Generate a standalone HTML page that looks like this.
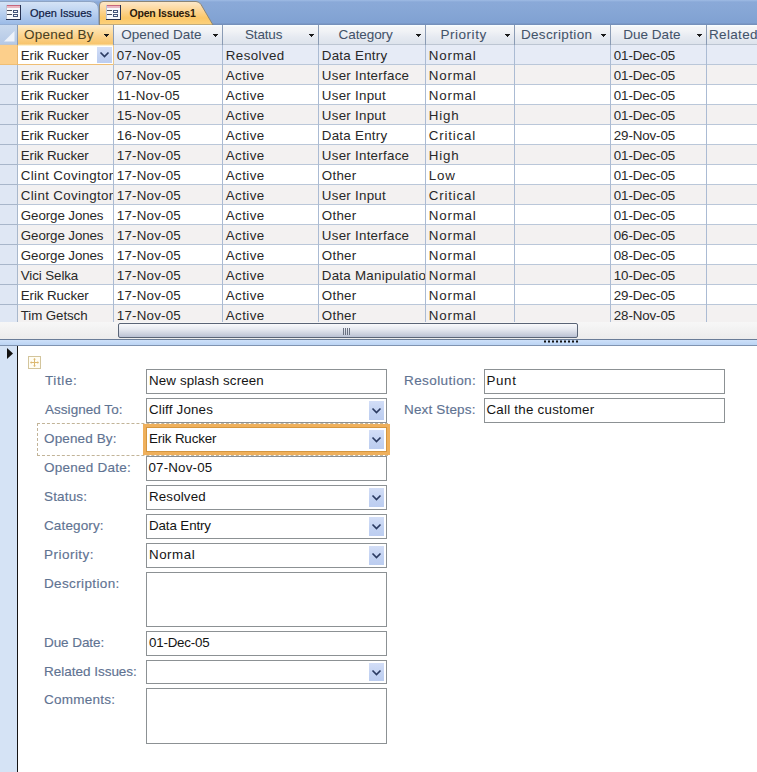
<!DOCTYPE html>
<html><head><meta charset="utf-8">
<style>
*{box-sizing:border-box;margin:0;padding:0}
html,body{width:757px;height:772px;overflow:hidden;background:#fff;font-family:"Liberation Sans",sans-serif;position:relative}
.a{position:absolute}
.t{position:absolute;white-space:pre;line-height:normal}
.clip{position:absolute;overflow:hidden}
.hl{position:absolute;top:25px;width:1px;height:20px;background:#8a9bb4}
.harr{position:absolute;top:34px;width:0;height:0;border-left:2.5px solid transparent;border-right:2.5px solid transparent;border-top:3px solid #1a1a1a}
.box{position:absolute;border:1px solid #8c9194;background:#fff}
.dd{position:absolute;width:15px;height:18px;background:linear-gradient(#d3def7,#c2d2f2 60%,#bccdf0)}

</style></head><body>
<!-- tab bar -->
<div class="a" style="left:0;top:0;width:757px;height:25px;background:linear-gradient(#9fbbe4 0,#8aa9d8 2px,#87a7d6 40%,#80a1d2 23px,#7590bb 24px,#7590bb 25px)"></div>
<svg class="a" style="left:0;top:0" width="230" height="25">
<defs>
<linearGradient id="ig" x1="0" y1="0" x2="0" y2="1"><stop offset="0" stop-color="#d6e4f6"/><stop offset="0.45" stop-color="#bcd2f0"/><stop offset="1" stop-color="#99b9e6"/></linearGradient>
<linearGradient id="ag" x1="0" y1="0" x2="0" y2="1"><stop offset="0" stop-color="#fde9cc"/><stop offset="0.3" stop-color="#fdd9a0"/><stop offset="0.7" stop-color="#fbc767"/><stop offset="1" stop-color="#fcd27e"/></linearGradient>
</defs>
<path d="M-2 25 L-2 1.5 L90 1.5 Q98.5 1.5 98.5 10 L98.5 25 Z" fill="url(#ig)" stroke="#8ea4c4" stroke-width="1"/>
<path d="M99.5 25 L99.5 5 Q99.5 1.5 103 1.5 L196 1.5 Q199 1.5 201 4.5 L213 25 Z" fill="url(#ag)" stroke="#8b8577" stroke-width="1"/>
</svg>
<svg class="a" style="left:6px;top:5px" width="15" height="15" shape-rendering="crispEdges"><rect x="0" y="0" width="15" height="15" fill="#f7f8fb"/><rect x="0" y="0" width="15" height="1" fill="#c5667c"/><rect x="0" y="1" width="14" height="2" fill="#eab6c2"/><rect x="0" y="0" width="1" height="15" fill="#b9c3d6"/><rect x="14" y="0" width="1" height="15" fill="#263150"/><rect x="0" y="14" width="15" height="1" fill="#263150"/><rect x="1" y="5" width="5" height="1" fill="#474d5c"/><rect x="1" y="9" width="5" height="1" fill="#474d5c"/><path d="M7 5h5v3h-5z M8 6v1h3v-1z" fill="#44557a" fill-rule="evenodd"/><path d="M7 9h5v3h-5z M8 10v1h3v-1z" fill="#44557a" fill-rule="evenodd"/></svg>
<svg class="a" style="left:106px;top:5px" width="15" height="15" shape-rendering="crispEdges"><rect x="0" y="0" width="15" height="15" fill="#f7f8fb"/><rect x="0" y="0" width="15" height="1" fill="#c5667c"/><rect x="0" y="1" width="14" height="2" fill="#eab6c2"/><rect x="0" y="0" width="1" height="15" fill="#b9c3d6"/><rect x="14" y="0" width="1" height="15" fill="#263150"/><rect x="0" y="14" width="15" height="1" fill="#263150"/><rect x="1" y="5" width="5" height="1" fill="#474d5c"/><rect x="1" y="9" width="5" height="1" fill="#474d5c"/><path d="M7 5h5v3h-5z M8 6v1h3v-1z" fill="#44557a" fill-rule="evenodd"/><path d="M7 9h5v3h-5z M8 10v1h3v-1z" fill="#44557a" fill-rule="evenodd"/></svg>

<!-- header -->
<div class="a" style="left:0;top:25px;width:757px;height:20px;background:linear-gradient(#f8fdff 0,#f8fdff 1px,#f3f4f6 2px,#f1f3f6 6px,#e6eaf1 12px,#dde3ec 19px);border-bottom:1px solid #bcc5d2"></div>
<div class="a" style="left:0;top:25px;width:17px;height:19px;background:linear-gradient(#c9d9ee,#b5c9e6)"></div>
<svg class="a" style="left:4px;top:31px" width="11" height="11"><path d="M10.5 0 L10.5 10.5 L0 10.5 Z" fill="#eef3fb"/></svg>
<div class="a" style="left:18px;top:25px;width:95px;height:20px;background:linear-gradient(#fdeccf 0,#fde3b0 20%,#fbd189 60%,#f8c56c 95%,#fbe2b5 100%)"></div>
<div class="hl" style="left:17px"></div><div class="hl" style="left:113px"></div><div class="hl" style="left:222px"></div><div class="hl" style="left:318px"></div><div class="hl" style="left:425px"></div><div class="hl" style="left:514px"></div><div class="hl" style="left:610px"></div><div class="hl" style="left:706px"></div>
<svg class="a" style="left:104px;top:34px" width="5" height="3"><path d="M0 0H5V1H4V2H3V3H2V2H1V1H0Z" fill="#1a1a1a"/></svg><svg class="a" style="left:213px;top:34px" width="5" height="3"><path d="M0 0H5V1H4V2H3V3H2V2H1V1H0Z" fill="#1a1a1a"/></svg><svg class="a" style="left:309px;top:34px" width="5" height="3"><path d="M0 0H5V1H4V2H3V3H2V2H1V1H0Z" fill="#1a1a1a"/></svg><svg class="a" style="left:416px;top:34px" width="5" height="3"><path d="M0 0H5V1H4V2H3V3H2V2H1V1H0Z" fill="#1a1a1a"/></svg><svg class="a" style="left:505px;top:34px" width="5" height="3"><path d="M0 0H5V1H4V2H3V3H2V2H1V1H0Z" fill="#1a1a1a"/></svg><svg class="a" style="left:601px;top:34px" width="5" height="3"><path d="M0 0H5V1H4V2H3V3H2V2H1V1H0Z" fill="#1a1a1a"/></svg><svg class="a" style="left:697px;top:34px" width="5" height="3"><path d="M0 0H5V1H4V2H3V3H2V2H1V1H0Z" fill="#1a1a1a"/></svg>

<!-- grid rows -->
<div class="a" id="grid" style="left:0;top:45px;width:757px;height:277px;overflow:hidden">
<div class="a" style="left:0;top:0px;width:757px;height:20px;background:#e6ebf6;border-bottom:1px solid #bac7d9"></div>
<div class="a" style="left:0;top:0px;width:17px;height:20px;background:#fccf8b;border-bottom:1px solid #a8b6ca"></div>
<div class="a" style="left:0;top:20px;width:757px;height:20px;background:#f3f1f1;border-bottom:1px solid #bac7d9"></div>
<div class="a" style="left:0;top:20px;width:17px;height:20px;background:#dfe7f4;border-bottom:1px solid #a8b6ca"></div>
<div class="a" style="left:0;top:40px;width:757px;height:20px;background:#ffffff;border-bottom:1px solid #bac7d9"></div>
<div class="a" style="left:0;top:40px;width:17px;height:20px;background:#dfe7f4;border-bottom:1px solid #a8b6ca"></div>
<div class="a" style="left:0;top:60px;width:757px;height:20px;background:#f3f1f1;border-bottom:1px solid #bac7d9"></div>
<div class="a" style="left:0;top:60px;width:17px;height:20px;background:#dfe7f4;border-bottom:1px solid #a8b6ca"></div>
<div class="a" style="left:0;top:80px;width:757px;height:20px;background:#ffffff;border-bottom:1px solid #bac7d9"></div>
<div class="a" style="left:0;top:80px;width:17px;height:20px;background:#dfe7f4;border-bottom:1px solid #a8b6ca"></div>
<div class="a" style="left:0;top:100px;width:757px;height:20px;background:#f3f1f1;border-bottom:1px solid #bac7d9"></div>
<div class="a" style="left:0;top:100px;width:17px;height:20px;background:#dfe7f4;border-bottom:1px solid #a8b6ca"></div>
<div class="a" style="left:0;top:120px;width:757px;height:20px;background:#ffffff;border-bottom:1px solid #bac7d9"></div>
<div class="a" style="left:0;top:120px;width:17px;height:20px;background:#dfe7f4;border-bottom:1px solid #a8b6ca"></div>
<div class="a" style="left:0;top:140px;width:757px;height:20px;background:#f3f1f1;border-bottom:1px solid #bac7d9"></div>
<div class="a" style="left:0;top:140px;width:17px;height:20px;background:#dfe7f4;border-bottom:1px solid #a8b6ca"></div>
<div class="a" style="left:0;top:160px;width:757px;height:20px;background:#ffffff;border-bottom:1px solid #bac7d9"></div>
<div class="a" style="left:0;top:160px;width:17px;height:20px;background:#dfe7f4;border-bottom:1px solid #a8b6ca"></div>
<div class="a" style="left:0;top:180px;width:757px;height:20px;background:#f3f1f1;border-bottom:1px solid #bac7d9"></div>
<div class="a" style="left:0;top:180px;width:17px;height:20px;background:#dfe7f4;border-bottom:1px solid #a8b6ca"></div>
<div class="a" style="left:0;top:200px;width:757px;height:20px;background:#ffffff;border-bottom:1px solid #bac7d9"></div>
<div class="a" style="left:0;top:200px;width:17px;height:20px;background:#dfe7f4;border-bottom:1px solid #a8b6ca"></div>
<div class="a" style="left:0;top:220px;width:757px;height:20px;background:#f3f1f1;border-bottom:1px solid #bac7d9"></div>
<div class="a" style="left:0;top:220px;width:17px;height:20px;background:#dfe7f4;border-bottom:1px solid #a8b6ca"></div>
<div class="a" style="left:0;top:240px;width:757px;height:20px;background:#ffffff;border-bottom:1px solid #bac7d9"></div>
<div class="a" style="left:0;top:240px;width:17px;height:20px;background:#dfe7f4;border-bottom:1px solid #a8b6ca"></div>
<div class="a" style="left:0;top:260px;width:757px;height:20px;background:#f3f1f1;border-bottom:1px solid #bac7d9"></div>
<div class="a" style="left:0;top:260px;width:17px;height:20px;background:#dfe7f4;border-bottom:1px solid #a8b6ca"></div>
<div class="a" style="left:17px;top:0;width:1px;height:277px;background:#a9b8cc"></div>
<div class="a" style="left:113px;top:0;width:1px;height:277px;background:#abbbd3"></div>
<div class="a" style="left:222px;top:0;width:1px;height:277px;background:#abbbd3"></div>
<div class="a" style="left:318px;top:0;width:1px;height:277px;background:#abbbd3"></div>
<div class="a" style="left:425px;top:0;width:1px;height:277px;background:#abbbd3"></div>
<div class="a" style="left:514px;top:0;width:1px;height:277px;background:#abbbd3"></div>
<div class="a" style="left:610px;top:0;width:1px;height:277px;background:#abbbd3"></div>
<div class="a" style="left:706px;top:0;width:1px;height:277px;background:#abbbd3"></div>
</div>
<!-- selected cell -->
<div class="a" style="left:18px;top:45px;width:95px;height:19px;background:#fff;border-top:1px solid #fcf1cc"></div>
<div class="a" style="left:0;top:64px;width:114px;height:1px;background:#efbe74"></div>
<div class="a" style="left:113px;top:45px;width:1px;height:20px;background:#e9c890"></div>
<div class="a" style="left:17px;top:45px;width:1px;height:20px;background:#e9b870"></div>
<div class="dd" style="left:97px;top:47px;height:16px"></div>
<svg class="a" style="left:99px;top:51px" width="11" height="8"><path d="M1.5 1.5 L5.5 5.5 L9.5 1.5" fill="none" stroke="#2b3b62" stroke-width="1.7"/></svg>

<!-- scrollbar -->
<div class="a" style="left:0;top:322px;width:757px;height:17px;background:linear-gradient(#f7f7f7,#ececec)"></div>
<div class="a" style="left:118px;top:323px;width:460px;height:15px;border:1px solid #596476;border-radius:2px;background:linear-gradient(#f9fafc,#e6e9f0 40%,#c9cfdd 80%,#b9c1d4)"></div>
<svg class="a" style="left:343px;top:328px" width="9" height="7"><path d="M0.5 0V7M2.5 0V7M4.5 0V7M6.5 0V7" stroke="#6a7282" stroke-width="1"/></svg>
<!-- splitter -->
<div class="a" style="left:0;top:339px;width:757px;height:7px;background:linear-gradient(#cde0f8,#bcd4f4);border-top:1px solid #6a7d98;border-bottom:1px solid #7f93b0"></div>
<svg class="a" style="left:544px;top:340px" width="36" height="3"><path d="M0 1.5H36" stroke="#111" stroke-width="2" stroke-dasharray="2 2"/></svg>

<!-- form -->
<div class="a" style="left:0;top:346px;width:17px;height:426px;background:#d5e3f5"></div>
<div class="a" style="left:17px;top:346px;width:1px;height:426px;background:#141414"></div>
<svg class="a" style="left:6px;top:348px" width="9" height="12"><path d="M1 0 L7 5.5 L1 11 Z" fill="#111"/></svg>
<svg class="a" style="left:28px;top:356px" width="13" height="13"><rect x="0.5" y="0.5" width="12" height="12" fill="#fffdf4" stroke="#d3c59c"/><path d="M6.5 3V10M3 6.5H10" stroke="#dcb870" stroke-width="1"/><path d="M6.5 2L5 3.5H8Z M6.5 11L5 9.5H8Z M2 6.5L3.5 5V8Z M11 6.5L9.5 5V8Z" fill="#dcb870"/></svg>

<div class="a" style="left:37px;top:423px;width:351px;height:33px;border:1px dashed #c2b498"></div>
<div class="a" style="left:143px;top:424px;width:247px;height:31px;border:3px solid #efb05c"></div>
<div class="box" style="left:146px;top:369px;width:241px;height:25px;"></div>
<div class="box" style="left:146px;top:398px;width:241px;height:25px;"></div>
<div class="dd" style="left:369px;top:401px;height:19px"></div>
<svg class="a" style="left:371px;top:407px" width="11" height="8"><path d="M1.5 1.5 L5.5 5.5 L9.5 1.5" fill="none" stroke="#2b3b62" stroke-width="1.7"/></svg>
<div class="box" style="left:146px;top:427px;width:241px;height:25px;border-color:#d4963f"></div>
<div class="dd" style="left:369px;top:430px;height:19px"></div>
<svg class="a" style="left:371px;top:436px" width="11" height="8"><path d="M1.5 1.5 L5.5 5.5 L9.5 1.5" fill="none" stroke="#2b3b62" stroke-width="1.7"/></svg>
<div class="box" style="left:146px;top:456px;width:241px;height:25px;"></div>
<div class="box" style="left:146px;top:485px;width:241px;height:25px;"></div>
<div class="dd" style="left:369px;top:488px;height:19px"></div>
<svg class="a" style="left:371px;top:494px" width="11" height="8"><path d="M1.5 1.5 L5.5 5.5 L9.5 1.5" fill="none" stroke="#2b3b62" stroke-width="1.7"/></svg>
<div class="box" style="left:146px;top:514px;width:241px;height:25px;"></div>
<div class="dd" style="left:369px;top:517px;height:19px"></div>
<svg class="a" style="left:371px;top:523px" width="11" height="8"><path d="M1.5 1.5 L5.5 5.5 L9.5 1.5" fill="none" stroke="#2b3b62" stroke-width="1.7"/></svg>
<div class="box" style="left:146px;top:543px;width:241px;height:25px;"></div>
<div class="dd" style="left:369px;top:546px;height:19px"></div>
<svg class="a" style="left:371px;top:552px" width="11" height="8"><path d="M1.5 1.5 L5.5 5.5 L9.5 1.5" fill="none" stroke="#2b3b62" stroke-width="1.7"/></svg>
<div class="box" style="left:146px;top:572px;width:241px;height:55px;"></div>
<div class="box" style="left:146px;top:631px;width:241px;height:25px;"></div>
<div class="box" style="left:146px;top:660px;width:241px;height:24px;"></div>
<div class="dd" style="left:369px;top:663px;height:18px"></div>
<svg class="a" style="left:371px;top:669px" width="11" height="8"><path d="M1.5 1.5 L5.5 5.5 L9.5 1.5" fill="none" stroke="#2b3b62" stroke-width="1.7"/></svg>
<div class="box" style="left:146px;top:688px;width:241px;height:56px;"></div>
<div class="box" style="left:484px;top:369px;width:241px;height:25px;"></div>
<div class="box" style="left:484px;top:398px;width:241px;height:25px;"></div>

<span class="t" id="tab1" style="left:30.00px;top:7.01px;font-size:11px;color:#0e1a44;letter-spacing:0.000px;-webkit-text-stroke:0.2px currentColor">Open Issues</span>
<span class="t" id="tab2" style="left:129.50px;top:7.00px;font-size:10.5px;color:#2b1a0a;letter-spacing:-0.182px;font-weight:bold">Open Issues1</span>
<span class="t" id="h0" style="left:24.00px;top:27.00px;font-size:13.5px;color:#4a3f22;letter-spacing:0.250px;-webkit-text-stroke:0.05px currentColor">Opened By</span>
<span class="t" id="h1" style="left:121.20px;top:27.00px;font-size:13.5px;color:#435369;letter-spacing:0.000px;-webkit-text-stroke:0.05px currentColor">Opened Date</span>
<span class="t" id="h2" style="left:245.00px;top:27.00px;font-size:13.5px;color:#435369;letter-spacing:-0.160px;-webkit-text-stroke:0.05px currentColor">Status</span>
<span class="t" id="h3" style="left:338.60px;top:27.00px;font-size:13.5px;color:#435369;letter-spacing:-0.086px;-webkit-text-stroke:0.05px currentColor">Category</span>
<span class="t" id="h4" style="left:440.40px;top:27.00px;font-size:13.5px;color:#435369;letter-spacing:0.543px;-webkit-text-stroke:0.05px currentColor">Priority</span>
<span class="t" id="h5" style="left:520.90px;top:27.00px;font-size:13.5px;color:#435369;letter-spacing:0.360px;-webkit-text-stroke:0.05px currentColor">Description</span>
<span class="t" id="h6" style="left:623.20px;top:27.00px;font-size:13.5px;color:#435369;letter-spacing:0.029px;-webkit-text-stroke:0.05px currentColor">Due Date</span>
<span class="t" id="h7" style="left:709.00px;top:27.00px;font-size:13.5px;color:#435369;letter-spacing:0.333px;-webkit-text-stroke:0.05px currentColor">Related</span>
<div class="clip" style="left:18px;top:45px;width:95px;height:19px"><span class="t" style="left:20.80px;top:48.01px;font-size:13.35px;color:#282828;letter-spacing:-0.100px;left:2.80px;top:3.01px">Erik Rucker</span></div>
<div class="clip" style="left:114px;top:45px;width:108px;height:19px"><span class="t" style="left:116.80px;top:48.01px;font-size:13.35px;color:#282828;letter-spacing:0.200px;left:2.80px;top:3.01px">07-Nov-05</span></div>
<div class="clip" style="left:223px;top:45px;width:95px;height:19px"><span class="t" style="left:225.80px;top:48.01px;font-size:13.35px;color:#282828;letter-spacing:0.400px;left:2.80px;top:3.01px">Resolved</span></div>
<div class="clip" style="left:319px;top:45px;width:106px;height:19px"><span class="t" style="left:321.80px;top:48.01px;font-size:13.35px;color:#282828;letter-spacing:0.260px;left:2.80px;top:3.01px">Data Entry</span></div>
<div class="clip" style="left:426px;top:45px;width:88px;height:19px"><span class="t" style="left:428.80px;top:48.01px;font-size:13.35px;color:#282828;letter-spacing:0.800px;left:2.80px;top:3.01px">Normal</span></div>
<div class="clip" style="left:611px;top:45px;width:95px;height:19px"><span class="t" style="left:613.80px;top:48.01px;font-size:13.35px;color:#282828;letter-spacing:-0.120px;left:2.80px;top:3.01px">01-Dec-05</span></div>
<div class="clip" style="left:18px;top:65px;width:95px;height:19px"><span class="t" style="left:20.80px;top:68.01px;font-size:13.35px;color:#282828;letter-spacing:-0.100px;left:2.80px;top:3.01px">Erik Rucker</span></div>
<div class="clip" style="left:114px;top:65px;width:108px;height:19px"><span class="t" style="left:116.80px;top:68.01px;font-size:13.35px;color:#282828;letter-spacing:0.200px;left:2.80px;top:3.01px">07-Nov-05</span></div>
<div class="clip" style="left:223px;top:65px;width:95px;height:19px"><span class="t" style="left:225.80px;top:68.01px;font-size:13.35px;color:#282828;letter-spacing:0.400px;left:2.80px;top:3.01px">Active</span></div>
<div class="clip" style="left:319px;top:65px;width:106px;height:19px"><span class="t" style="left:321.80px;top:68.01px;font-size:13.35px;color:#282828;letter-spacing:0.260px;left:2.80px;top:3.01px">User Interface</span></div>
<div class="clip" style="left:426px;top:65px;width:88px;height:19px"><span class="t" style="left:428.80px;top:68.01px;font-size:13.35px;color:#282828;letter-spacing:0.800px;left:2.80px;top:3.01px">Normal</span></div>
<div class="clip" style="left:611px;top:65px;width:95px;height:19px"><span class="t" style="left:613.80px;top:68.01px;font-size:13.35px;color:#282828;letter-spacing:-0.120px;left:2.80px;top:3.01px">01-Dec-05</span></div>
<div class="clip" style="left:18px;top:85px;width:95px;height:19px"><span class="t" style="left:20.80px;top:88.01px;font-size:13.35px;color:#282828;letter-spacing:-0.100px;left:2.80px;top:3.01px">Erik Rucker</span></div>
<div class="clip" style="left:114px;top:85px;width:108px;height:19px"><span class="t" style="left:116.80px;top:88.01px;font-size:13.35px;color:#282828;letter-spacing:0.200px;left:2.80px;top:3.01px">11-Nov-05</span></div>
<div class="clip" style="left:223px;top:85px;width:95px;height:19px"><span class="t" style="left:225.80px;top:88.01px;font-size:13.35px;color:#282828;letter-spacing:0.400px;left:2.80px;top:3.01px">Active</span></div>
<div class="clip" style="left:319px;top:85px;width:106px;height:19px"><span class="t" style="left:321.80px;top:88.01px;font-size:13.35px;color:#282828;letter-spacing:0.260px;left:2.80px;top:3.01px">User Input</span></div>
<div class="clip" style="left:426px;top:85px;width:88px;height:19px"><span class="t" style="left:428.80px;top:88.01px;font-size:13.35px;color:#282828;letter-spacing:0.800px;left:2.80px;top:3.01px">Normal</span></div>
<div class="clip" style="left:611px;top:85px;width:95px;height:19px"><span class="t" style="left:613.80px;top:88.01px;font-size:13.35px;color:#282828;letter-spacing:-0.120px;left:2.80px;top:3.01px">01-Dec-05</span></div>
<div class="clip" style="left:18px;top:105px;width:95px;height:19px"><span class="t" style="left:20.80px;top:108.01px;font-size:13.35px;color:#282828;letter-spacing:-0.100px;left:2.80px;top:3.01px">Erik Rucker</span></div>
<div class="clip" style="left:114px;top:105px;width:108px;height:19px"><span class="t" style="left:116.80px;top:108.01px;font-size:13.35px;color:#282828;letter-spacing:0.200px;left:2.80px;top:3.01px">15-Nov-05</span></div>
<div class="clip" style="left:223px;top:105px;width:95px;height:19px"><span class="t" style="left:225.80px;top:108.01px;font-size:13.35px;color:#282828;letter-spacing:0.400px;left:2.80px;top:3.01px">Active</span></div>
<div class="clip" style="left:319px;top:105px;width:106px;height:19px"><span class="t" style="left:321.80px;top:108.01px;font-size:13.35px;color:#282828;letter-spacing:0.260px;left:2.80px;top:3.01px">User Input</span></div>
<div class="clip" style="left:426px;top:105px;width:88px;height:19px"><span class="t" style="left:428.80px;top:108.01px;font-size:13.35px;color:#282828;letter-spacing:0.800px;left:2.80px;top:3.01px">High</span></div>
<div class="clip" style="left:611px;top:105px;width:95px;height:19px"><span class="t" style="left:613.80px;top:108.01px;font-size:13.35px;color:#282828;letter-spacing:-0.120px;left:2.80px;top:3.01px">01-Dec-05</span></div>
<div class="clip" style="left:18px;top:125px;width:95px;height:19px"><span class="t" style="left:20.80px;top:128.01px;font-size:13.35px;color:#282828;letter-spacing:-0.100px;left:2.80px;top:3.01px">Erik Rucker</span></div>
<div class="clip" style="left:114px;top:125px;width:108px;height:19px"><span class="t" style="left:116.80px;top:128.01px;font-size:13.35px;color:#282828;letter-spacing:0.200px;left:2.80px;top:3.01px">16-Nov-05</span></div>
<div class="clip" style="left:223px;top:125px;width:95px;height:19px"><span class="t" style="left:225.80px;top:128.01px;font-size:13.35px;color:#282828;letter-spacing:0.400px;left:2.80px;top:3.01px">Active</span></div>
<div class="clip" style="left:319px;top:125px;width:106px;height:19px"><span class="t" style="left:321.80px;top:128.01px;font-size:13.35px;color:#282828;letter-spacing:0.260px;left:2.80px;top:3.01px">Data Entry</span></div>
<div class="clip" style="left:426px;top:125px;width:88px;height:19px"><span class="t" style="left:428.80px;top:128.01px;font-size:13.35px;color:#282828;letter-spacing:0.800px;left:2.80px;top:3.01px">Critical</span></div>
<div class="clip" style="left:611px;top:125px;width:95px;height:19px"><span class="t" style="left:613.80px;top:128.01px;font-size:13.35px;color:#282828;letter-spacing:-0.120px;left:2.80px;top:3.01px">29-Nov-05</span></div>
<div class="clip" style="left:18px;top:145px;width:95px;height:19px"><span class="t" style="left:20.80px;top:148.01px;font-size:13.35px;color:#282828;letter-spacing:-0.100px;left:2.80px;top:3.01px">Erik Rucker</span></div>
<div class="clip" style="left:114px;top:145px;width:108px;height:19px"><span class="t" style="left:116.80px;top:148.01px;font-size:13.35px;color:#282828;letter-spacing:0.200px;left:2.80px;top:3.01px">17-Nov-05</span></div>
<div class="clip" style="left:223px;top:145px;width:95px;height:19px"><span class="t" style="left:225.80px;top:148.01px;font-size:13.35px;color:#282828;letter-spacing:0.400px;left:2.80px;top:3.01px">Active</span></div>
<div class="clip" style="left:319px;top:145px;width:106px;height:19px"><span class="t" style="left:321.80px;top:148.01px;font-size:13.35px;color:#282828;letter-spacing:0.260px;left:2.80px;top:3.01px">User Interface</span></div>
<div class="clip" style="left:426px;top:145px;width:88px;height:19px"><span class="t" style="left:428.80px;top:148.01px;font-size:13.35px;color:#282828;letter-spacing:0.800px;left:2.80px;top:3.01px">High</span></div>
<div class="clip" style="left:611px;top:145px;width:95px;height:19px"><span class="t" style="left:613.80px;top:148.01px;font-size:13.35px;color:#282828;letter-spacing:-0.120px;left:2.80px;top:3.01px">01-Dec-05</span></div>
<div class="clip" style="left:18px;top:165px;width:95px;height:19px"><span class="t" style="left:20.80px;top:168.01px;font-size:13.35px;color:#282828;letter-spacing:0.350px;left:2.80px;top:3.01px">Clint Covington</span></div>
<div class="clip" style="left:114px;top:165px;width:108px;height:19px"><span class="t" style="left:116.80px;top:168.01px;font-size:13.35px;color:#282828;letter-spacing:0.200px;left:2.80px;top:3.01px">17-Nov-05</span></div>
<div class="clip" style="left:223px;top:165px;width:95px;height:19px"><span class="t" style="left:225.80px;top:168.01px;font-size:13.35px;color:#282828;letter-spacing:0.400px;left:2.80px;top:3.01px">Active</span></div>
<div class="clip" style="left:319px;top:165px;width:106px;height:19px"><span class="t" style="left:321.80px;top:168.01px;font-size:13.35px;color:#282828;letter-spacing:0.260px;left:2.80px;top:3.01px">Other</span></div>
<div class="clip" style="left:426px;top:165px;width:88px;height:19px"><span class="t" style="left:428.80px;top:168.01px;font-size:13.35px;color:#282828;letter-spacing:0.800px;left:2.80px;top:3.01px">Low</span></div>
<div class="clip" style="left:611px;top:165px;width:95px;height:19px"><span class="t" style="left:613.80px;top:168.01px;font-size:13.35px;color:#282828;letter-spacing:-0.120px;left:2.80px;top:3.01px">01-Dec-05</span></div>
<div class="clip" style="left:18px;top:185px;width:95px;height:19px"><span class="t" style="left:20.80px;top:188.01px;font-size:13.35px;color:#282828;letter-spacing:0.350px;left:2.80px;top:3.01px">Clint Covington</span></div>
<div class="clip" style="left:114px;top:185px;width:108px;height:19px"><span class="t" style="left:116.80px;top:188.01px;font-size:13.35px;color:#282828;letter-spacing:0.200px;left:2.80px;top:3.01px">17-Nov-05</span></div>
<div class="clip" style="left:223px;top:185px;width:95px;height:19px"><span class="t" style="left:225.80px;top:188.01px;font-size:13.35px;color:#282828;letter-spacing:0.400px;left:2.80px;top:3.01px">Active</span></div>
<div class="clip" style="left:319px;top:185px;width:106px;height:19px"><span class="t" style="left:321.80px;top:188.01px;font-size:13.35px;color:#282828;letter-spacing:0.260px;left:2.80px;top:3.01px">User Input</span></div>
<div class="clip" style="left:426px;top:185px;width:88px;height:19px"><span class="t" style="left:428.80px;top:188.01px;font-size:13.35px;color:#282828;letter-spacing:0.800px;left:2.80px;top:3.01px">Critical</span></div>
<div class="clip" style="left:611px;top:185px;width:95px;height:19px"><span class="t" style="left:613.80px;top:188.01px;font-size:13.35px;color:#282828;letter-spacing:-0.120px;left:2.80px;top:3.01px">01-Dec-05</span></div>
<div class="clip" style="left:18px;top:205px;width:95px;height:19px"><span class="t" style="left:20.80px;top:208.01px;font-size:13.35px;color:#282828;letter-spacing:-0.100px;left:2.80px;top:3.01px">George Jones</span></div>
<div class="clip" style="left:114px;top:205px;width:108px;height:19px"><span class="t" style="left:116.80px;top:208.01px;font-size:13.35px;color:#282828;letter-spacing:0.200px;left:2.80px;top:3.01px">17-Nov-05</span></div>
<div class="clip" style="left:223px;top:205px;width:95px;height:19px"><span class="t" style="left:225.80px;top:208.01px;font-size:13.35px;color:#282828;letter-spacing:0.400px;left:2.80px;top:3.01px">Active</span></div>
<div class="clip" style="left:319px;top:205px;width:106px;height:19px"><span class="t" style="left:321.80px;top:208.01px;font-size:13.35px;color:#282828;letter-spacing:0.260px;left:2.80px;top:3.01px">Other</span></div>
<div class="clip" style="left:426px;top:205px;width:88px;height:19px"><span class="t" style="left:428.80px;top:208.01px;font-size:13.35px;color:#282828;letter-spacing:0.800px;left:2.80px;top:3.01px">Normal</span></div>
<div class="clip" style="left:611px;top:205px;width:95px;height:19px"><span class="t" style="left:613.80px;top:208.01px;font-size:13.35px;color:#282828;letter-spacing:-0.120px;left:2.80px;top:3.01px">01-Dec-05</span></div>
<div class="clip" style="left:18px;top:225px;width:95px;height:19px"><span class="t" style="left:20.80px;top:228.01px;font-size:13.35px;color:#282828;letter-spacing:-0.100px;left:2.80px;top:3.01px">George Jones</span></div>
<div class="clip" style="left:114px;top:225px;width:108px;height:19px"><span class="t" style="left:116.80px;top:228.01px;font-size:13.35px;color:#282828;letter-spacing:0.200px;left:2.80px;top:3.01px">17-Nov-05</span></div>
<div class="clip" style="left:223px;top:225px;width:95px;height:19px"><span class="t" style="left:225.80px;top:228.01px;font-size:13.35px;color:#282828;letter-spacing:0.400px;left:2.80px;top:3.01px">Active</span></div>
<div class="clip" style="left:319px;top:225px;width:106px;height:19px"><span class="t" style="left:321.80px;top:228.01px;font-size:13.35px;color:#282828;letter-spacing:0.260px;left:2.80px;top:3.01px">User Interface</span></div>
<div class="clip" style="left:426px;top:225px;width:88px;height:19px"><span class="t" style="left:428.80px;top:228.01px;font-size:13.35px;color:#282828;letter-spacing:0.800px;left:2.80px;top:3.01px">Normal</span></div>
<div class="clip" style="left:611px;top:225px;width:95px;height:19px"><span class="t" style="left:613.80px;top:228.01px;font-size:13.35px;color:#282828;letter-spacing:-0.120px;left:2.80px;top:3.01px">06-Dec-05</span></div>
<div class="clip" style="left:18px;top:245px;width:95px;height:19px"><span class="t" style="left:20.80px;top:248.01px;font-size:13.35px;color:#282828;letter-spacing:-0.100px;left:2.80px;top:3.01px">George Jones</span></div>
<div class="clip" style="left:114px;top:245px;width:108px;height:19px"><span class="t" style="left:116.80px;top:248.01px;font-size:13.35px;color:#282828;letter-spacing:0.200px;left:2.80px;top:3.01px">17-Nov-05</span></div>
<div class="clip" style="left:223px;top:245px;width:95px;height:19px"><span class="t" style="left:225.80px;top:248.01px;font-size:13.35px;color:#282828;letter-spacing:0.400px;left:2.80px;top:3.01px">Active</span></div>
<div class="clip" style="left:319px;top:245px;width:106px;height:19px"><span class="t" style="left:321.80px;top:248.01px;font-size:13.35px;color:#282828;letter-spacing:0.260px;left:2.80px;top:3.01px">Other</span></div>
<div class="clip" style="left:426px;top:245px;width:88px;height:19px"><span class="t" style="left:428.80px;top:248.01px;font-size:13.35px;color:#282828;letter-spacing:0.800px;left:2.80px;top:3.01px">Normal</span></div>
<div class="clip" style="left:611px;top:245px;width:95px;height:19px"><span class="t" style="left:613.80px;top:248.01px;font-size:13.35px;color:#282828;letter-spacing:-0.120px;left:2.80px;top:3.01px">08-Dec-05</span></div>
<div class="clip" style="left:18px;top:265px;width:95px;height:19px"><span class="t" style="left:20.80px;top:268.01px;font-size:13.35px;color:#282828;letter-spacing:-0.100px;left:2.80px;top:3.01px">Vici Selka</span></div>
<div class="clip" style="left:114px;top:265px;width:108px;height:19px"><span class="t" style="left:116.80px;top:268.01px;font-size:13.35px;color:#282828;letter-spacing:0.200px;left:2.80px;top:3.01px">17-Nov-05</span></div>
<div class="clip" style="left:223px;top:265px;width:95px;height:19px"><span class="t" style="left:225.80px;top:268.01px;font-size:13.35px;color:#282828;letter-spacing:0.400px;left:2.80px;top:3.01px">Active</span></div>
<div class="clip" style="left:319px;top:265px;width:106px;height:19px"><span class="t" style="left:321.80px;top:268.01px;font-size:13.35px;color:#282828;letter-spacing:0.260px;left:2.80px;top:3.01px">Data Manipulation</span></div>
<div class="clip" style="left:426px;top:265px;width:88px;height:19px"><span class="t" style="left:428.80px;top:268.01px;font-size:13.35px;color:#282828;letter-spacing:0.800px;left:2.80px;top:3.01px">Normal</span></div>
<div class="clip" style="left:611px;top:265px;width:95px;height:19px"><span class="t" style="left:613.80px;top:268.01px;font-size:13.35px;color:#282828;letter-spacing:-0.120px;left:2.80px;top:3.01px">10-Dec-05</span></div>
<div class="clip" style="left:18px;top:285px;width:95px;height:19px"><span class="t" style="left:20.80px;top:288.01px;font-size:13.35px;color:#282828;letter-spacing:-0.100px;left:2.80px;top:3.01px">Erik Rucker</span></div>
<div class="clip" style="left:114px;top:285px;width:108px;height:19px"><span class="t" style="left:116.80px;top:288.01px;font-size:13.35px;color:#282828;letter-spacing:0.200px;left:2.80px;top:3.01px">17-Nov-05</span></div>
<div class="clip" style="left:223px;top:285px;width:95px;height:19px"><span class="t" style="left:225.80px;top:288.01px;font-size:13.35px;color:#282828;letter-spacing:0.400px;left:2.80px;top:3.01px">Active</span></div>
<div class="clip" style="left:319px;top:285px;width:106px;height:19px"><span class="t" style="left:321.80px;top:288.01px;font-size:13.35px;color:#282828;letter-spacing:0.260px;left:2.80px;top:3.01px">Other</span></div>
<div class="clip" style="left:426px;top:285px;width:88px;height:19px"><span class="t" style="left:428.80px;top:288.01px;font-size:13.35px;color:#282828;letter-spacing:0.800px;left:2.80px;top:3.01px">Normal</span></div>
<div class="clip" style="left:611px;top:285px;width:95px;height:19px"><span class="t" style="left:613.80px;top:288.01px;font-size:13.35px;color:#282828;letter-spacing:-0.120px;left:2.80px;top:3.01px">29-Dec-05</span></div>
<div class="clip" style="left:18px;top:305px;width:95px;height:19px"><span class="t" style="left:20.80px;top:308.01px;font-size:13.35px;color:#282828;letter-spacing:-0.100px;left:2.80px;top:3.01px">Tim Getsch</span></div>
<div class="clip" style="left:114px;top:305px;width:108px;height:19px"><span class="t" style="left:116.80px;top:308.01px;font-size:13.35px;color:#282828;letter-spacing:0.200px;left:2.80px;top:3.01px">17-Nov-05</span></div>
<div class="clip" style="left:223px;top:305px;width:95px;height:19px"><span class="t" style="left:225.80px;top:308.01px;font-size:13.35px;color:#282828;letter-spacing:0.400px;left:2.80px;top:3.01px">Active</span></div>
<div class="clip" style="left:319px;top:305px;width:106px;height:19px"><span class="t" style="left:321.80px;top:308.01px;font-size:13.35px;color:#282828;letter-spacing:0.260px;left:2.80px;top:3.01px">Other</span></div>
<div class="clip" style="left:426px;top:305px;width:88px;height:19px"><span class="t" style="left:428.80px;top:308.01px;font-size:13.35px;color:#282828;letter-spacing:0.800px;left:2.80px;top:3.01px">Normal</span></div>
<div class="clip" style="left:611px;top:305px;width:95px;height:19px"><span class="t" style="left:613.80px;top:308.01px;font-size:13.35px;color:#282828;letter-spacing:-0.120px;left:2.80px;top:3.01px">28-Nov-05</span></div>
<span class="t" id="l0" style="left:45.00px;top:373.00px;font-size:13.5px;color:#5f7392;letter-spacing:0.600px;-webkit-text-stroke:0.15px currentColor">Title:</span>
<span class="t" id="l1" style="left:45.00px;top:402.00px;font-size:13.5px;color:#5f7392;letter-spacing:0.036px;-webkit-text-stroke:0.15px currentColor">Assigned To:</span>
<span class="t" id="l2" style="left:44.00px;top:431.00px;font-size:13.5px;color:#5f7392;letter-spacing:0.133px;-webkit-text-stroke:0.15px currentColor">Opened By:</span>
<span class="t" id="l3" style="left:44.00px;top:460.00px;font-size:13.5px;color:#5f7392;letter-spacing:0.236px;-webkit-text-stroke:0.15px currentColor">Opened Date:</span>
<span class="t" id="l4" style="left:44.00px;top:489.00px;font-size:13.5px;color:#5f7392;letter-spacing:0.167px;-webkit-text-stroke:0.15px currentColor">Status:</span>
<span class="t" id="l5" style="left:44.00px;top:518.00px;font-size:13.5px;color:#5f7392;letter-spacing:0.125px;-webkit-text-stroke:0.15px currentColor">Category:</span>
<span class="t" id="l6" style="left:44.00px;top:547.00px;font-size:13.5px;color:#5f7392;letter-spacing:0.475px;-webkit-text-stroke:0.15px currentColor">Priority:</span>
<span class="t" id="l7" style="left:44.00px;top:576.00px;font-size:13.5px;color:#5f7392;letter-spacing:0.364px;-webkit-text-stroke:0.15px currentColor">Description:</span>
<span class="t" id="l8" style="left:44.00px;top:635.00px;font-size:13.5px;color:#5f7392;letter-spacing:-0.075px;-webkit-text-stroke:0.15px currentColor">Due Date:</span>
<span class="t" id="l9" style="left:44.00px;top:664.00px;font-size:13.5px;color:#5f7392;letter-spacing:-0.014px;-webkit-text-stroke:0.15px currentColor">Related Issues:</span>
<span class="t" id="l10" style="left:44.00px;top:692.00px;font-size:13.5px;color:#5f7392;letter-spacing:0.250px;-webkit-text-stroke:0.15px currentColor">Comments:</span>
<span class="t" id="lr0" style="left:404.00px;top:373.00px;font-size:13.5px;color:#5f7392;letter-spacing:0.420px;-webkit-text-stroke:0.15px currentColor">Resolution:</span>
<span class="t" id="lr1" style="left:404.00px;top:402.00px;font-size:13.5px;color:#5f7392;letter-spacing:0.160px;-webkit-text-stroke:0.15px currentColor">Next Steps:</span>
<span class="t" id="v0" style="left:149.00px;top:373.01px;font-size:13.35px;color:#141414;letter-spacing:0.125px">New splash screen</span>
<span class="t" id="v1" style="left:149.00px;top:402.01px;font-size:13.35px;color:#141414;letter-spacing:0.180px">Cliff Jones</span>
<span class="t" id="v2" style="left:149.00px;top:431.01px;font-size:13.35px;color:#141414;letter-spacing:-0.160px">Erik Rucker</span>
<span class="t" id="v3" style="left:148.40px;top:460.01px;font-size:13.35px;color:#141414;letter-spacing:0.200px">07-Nov-05</span>
<span class="t" id="v4" style="left:149.00px;top:489.01px;font-size:13.35px;color:#141414;letter-spacing:0.143px">Resolved</span>
<span class="t" id="v5" style="left:149.00px;top:518.01px;font-size:13.35px;color:#141414;letter-spacing:-0.111px">Data Entry</span>
<span class="t" id="v6" style="left:149.00px;top:547.01px;font-size:13.35px;color:#141414;letter-spacing:0.520px">Normal</span>
<span class="t" id="v7" style="left:149.10px;top:635.01px;font-size:13.35px;color:#141414;letter-spacing:-0.225px">01-Dec-05</span>
<span class="t" id="vr0" style="left:486.40px;top:373.01px;font-size:13.35px;color:#141414;letter-spacing:0.667px">Punt</span>
<span class="t" id="vr1" style="left:486.40px;top:402.01px;font-size:13.35px;color:#141414;letter-spacing:0.250px">Call the customer</span>
</body></html>
